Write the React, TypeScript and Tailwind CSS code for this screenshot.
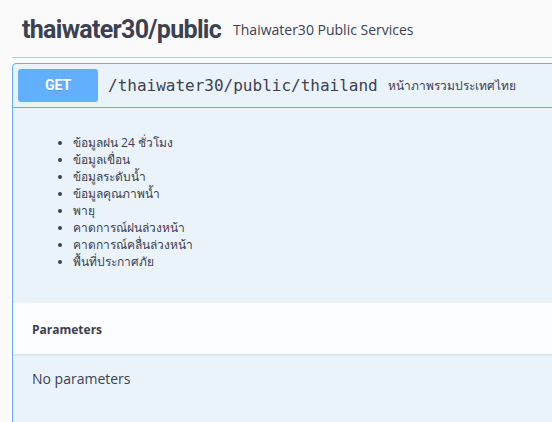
import React from 'react'

const items = [
  'ข้อมูลฝน 24 ชั่วโมง',
  'ข้อมูลเขื่อน',
  'ข้อมูลระดับน้ำ',
  'ข้อมูลคุณภาพน้ำ',
  'พายุ',
  'คาดการณ์ฝนล่วงหน้า',
  'คาดการณ์คลื่นล่วงหน้า',
  'พื้นที่ประกาศภัย',
]

export default function App() {
  return (
    <div className="w-[552px] h-[422px] overflow-hidden bg-[#fafafa] text-[#3b4151] font-['Open_Sans',sans-serif]">
      {/* info header */}
      <div className="h-[57px] pt-[15px] pl-[22px] flex items-start gap-[12px]">
        <h2 className="font-['Roboto',sans-serif] font-bold text-[25px] leading-[30px] tracking-[-0.7px] whitespace-nowrap">
          thaiwater30/public
        </h2>
        <span className="mt-[5px] text-[14px] leading-[20px] whitespace-nowrap">Thaiwater30 Public Services</span>
      </div>
      <div className="ml-[12px] border-t border-[#c6c8cd]" />

      {/* operation block */}
      <div className="mt-[5px] ml-[12px] w-[600px] border border-[#61affe] rounded-[4px] bg-[#ebf3fa] h-[400px]">
        <div className="flex items-center p-[5px] border-b border-[#61affe]">
          <div className="w-[80px] h-[33px] shrink-0 rounded-[3px] bg-[#61affe] text-white font-['Roboto',sans-serif] font-bold text-[14px] flex items-center justify-center [text-shadow:0_1px_0_rgba(0,0,0,0.1)]">
            GET
          </div>
          <span className="px-[10px] font-['DejaVu_Sans_Mono',monospace] text-[16px] leading-[20px] whitespace-nowrap">
            /thaiwater30/public/thailand
          </span>
          <span className="text-[12px] leading-[20px] whitespace-nowrap">หน้าภาพรวมประเทศไทย</span>
        </div>

        <div className="pt-[26px] pb-[33px] px-[20px]">
          <ul className="list-disc pl-[40px] text-[12px] leading-[17px]">
            {items.map(t => (
              <li key={t}>{t}</li>
            ))}
          </ul>
        </div>

        <div className="h-[51px] px-[19px] flex items-center bg-[#fbfdfe] shadow-[0_1px_2px_rgba(0,0,0,0.1)]">
          <h4 className="font-bold text-[12px] pt-[2px]">Parameters</h4>
        </div>
        <div className="pt-[15px] px-[19px]">
          <p className="text-[14px] leading-[20px]">No parameters</p>
        </div>
      </div>
    </div>
  )
}
